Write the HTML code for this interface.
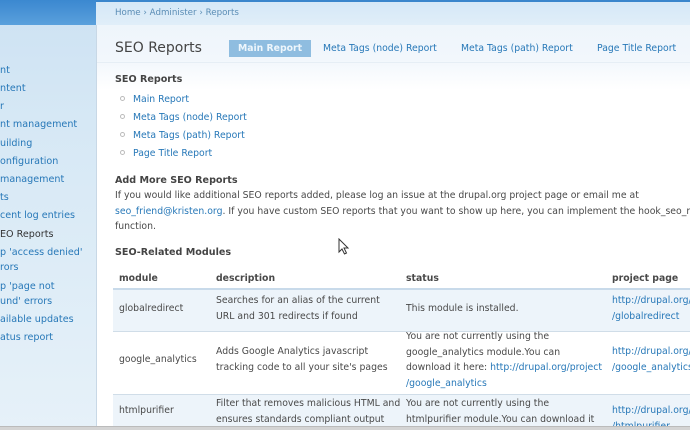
<!DOCTYPE html>
<html><head><meta charset="utf-8"><style>
*{margin:0;padding:0;box-sizing:border-box}
body{width:690px;height:430px;overflow:hidden;position:relative;font-family:"DejaVu Sans","Liberation Sans",sans-serif;font-size:9.3px;color:#494949;background:#fff}
a{color:#2778b8;text-decoration:none}
.side{position:absolute;left:0;top:0;width:97px;height:430px;overflow:hidden;background:linear-gradient(#cfe3f3 25px,#d6e8f5 120px,#e6f1f9 430px)}
.sidetop{position:absolute;left:0;top:0;width:97px;height:25px;background:linear-gradient(#3b88d0,#5aa0dc)}
.side div{position:absolute;left:0;line-height:15px;color:#2778b8;white-space:nowrap;font-size:9.6px}
.main{position:absolute;left:96px;top:0;width:594px;height:426px;border-left:1px solid #c8d8e6;background:linear-gradient(#eef5fb 25px,#f2f7fc 60px,#fff 90px)}
.clip{position:absolute;left:0;top:0;width:690px;height:430px;overflow:hidden}
.topline{position:absolute;left:96px;top:0;width:594px;height:2px;background:#3a86cc}
.crumb{position:absolute;left:96px;top:2px;width:594px;height:23px;background:linear-gradient(#d5e8f7,#e0eef9);color:#5b8db5;font-size:8.7px;padding:6px 0 0 19px}
.abs{position:absolute;white-space:nowrap}
h1{position:absolute;left:115px;top:40px;font-weight:normal;font-size:14px;color:#444}
.tab{position:absolute;top:40px;height:17px;line-height:17px;font-size:9.3px;color:#2778b8}
.tabs-line{position:absolute;left:97px;top:62px;width:593px;height:1px;background:#e6eef5}
h3{position:absolute;font-size:9.6px;font-weight:bold;color:#444}
.li{position:absolute;left:133px}
.bul{position:absolute;left:120px;width:5px;height:5px;border:1px solid #bbb;border-radius:50%}
.row{position:absolute;left:113px;width:577px;border-top:1px solid #d0dde8}
.c{position:absolute;line-height:15.5px}
.bottom{position:absolute;left:0;top:426px;width:690px;height:4px;background:#d4d4d4;border-top:1px solid #bbb}
</style></head><body>
<div class="side"><div class="sidetop"></div>
<div style="top:63px">nt</div>
<div style="top:81px">ntent</div>
<div style="top:99px">r</div>
<div style="top:117px">nt management</div>
<div style="top:136px">uilding</div>
<div style="top:154px">onfiguration</div>
<div style="top:172px">management</div>
<div style="top:190px">ts</div>
<div style="top:208px">cent log entries</div>
<div style="top:227px;color:#333">EO Reports</div>
<div style="top:245px">p 'access denied'<br>rors</div>
<div style="top:279px">p 'page not<br>und' errors</div>
<div style="top:312px">ailable updates</div>
<div style="top:330px">atus report</div>
</div>
<div class="clip">
<div class="main"></div>
<div class="topline"></div>
<div class="crumb">Home › Administer › Reports</div>
<h1>SEO Reports</h1>
<div class="tab" style="left:229px;width:82px;background:#8fbde0;color:#eef6fc;font-weight:bold;text-align:center">Main Report</div>
<div class="tab" style="left:323px">Meta Tags (node) Report</div>
<div class="tab" style="left:461px">Meta Tags (path) Report</div>
<div class="tab" style="left:597px">Page Title Report</div>
<div class="tabs-line"></div>
<h3 style="left:115px;top:74px">SEO Reports</h3>
<div class="bul" style="top:96px"></div><a class="abs li" style="top:94px">Main Report</a>
<div class="bul" style="top:114px"></div><a class="abs li" style="top:112px">Meta Tags (node) Report</a>
<div class="bul" style="top:132px"></div><a class="abs li" style="top:130px">Meta Tags (path) Report</a>
<div class="bul" style="top:150px"></div><a class="abs li" style="top:148px">Page Title Report</a>
<h3 style="left:115px;top:175px">Add More SEO Reports</h3>
<div class="abs" style="left:115px;top:190px">If you would like additional SEO reports added, please log an issue at the drupal.org project page or email me at</div>
<div class="abs" style="left:115px;top:206px"><a>seo_friend@kristen.org</a>. If you have custom SEO reports that you want to show up here, you can implement the hook_seo_reports</div>
<div class="abs" style="left:115px;top:221px">function.</div>
<h3 style="left:115px;top:247px">SEO-Related Modules</h3>
<svg class="abs" style="left:338px;top:238px" width="12" height="18" viewBox="0 0 12 18"><path d="M1 1 L1 14 L4 11 L6.5 16 L8.5 15 L6 10 L10 10 Z" fill="#fff" stroke="#333" stroke-width="1"/></svg>
<div class="abs" style="left:119px;top:273px;font-weight:bold">module</div>
<div class="abs" style="left:216px;top:273px;font-weight:bold">description</div>
<div class="abs" style="left:406px;top:273px;font-weight:bold">status</div>
<div class="abs" style="left:612px;top:273px;font-weight:bold">project page</div>
<div class="row" style="top:288px;height:43px;background:#edf4fa;border-top:2px solid #c8daea"></div>
<div class="row" style="top:331px;height:63px;background:#fff"></div>
<div class="row" style="top:394px;height:32px;background:#edf4fa"></div>
<div class="c abs" style="left:119px;top:301px">globalredirect</div>
<div class="c abs" style="left:216px;top:293px">Searches for an alias of the current<br>URL and 301 redirects if found</div>
<div class="c abs" style="left:406px;top:301px">This module is installed.</div>
<div class="c abs" style="left:612px;top:293px"><a>http://drupal.org/</a><br><a>/globalredirect</a></div>
<div class="c abs" style="left:119px;top:352px">google_analytics</div>
<div class="c abs" style="left:216px;top:344px">Adds Google Analytics javascript<br>tracking code to all your site's pages</div>
<div class="c abs" style="left:406px;top:329px">You are not currently using the<br>google_analytics module.You can<br>download it here: <a>http://drupal.org/project</a><br><a>/google_analytics</a></div>
<div class="c abs" style="left:612px;top:344px"><a>http://drupal.org/</a><br><a>/google_analytics</a></div>
<div class="c abs" style="left:119px;top:403px">htmlpurifier</div>
<div class="c abs" style="left:216px;top:396px">Filter that removes malicious HTML and<br>ensures standards compliant output</div>
<div class="c abs" style="left:406px;top:396px">You are not currently using the<br>htmlpurifier module.You can download it</div>
<div class="c abs" style="left:612px;top:403px"><a>http://drupal.org/</a><br><a>/htmlpurifier</a></div>
</div>
<div class="bottom"></div>
</body></html>
